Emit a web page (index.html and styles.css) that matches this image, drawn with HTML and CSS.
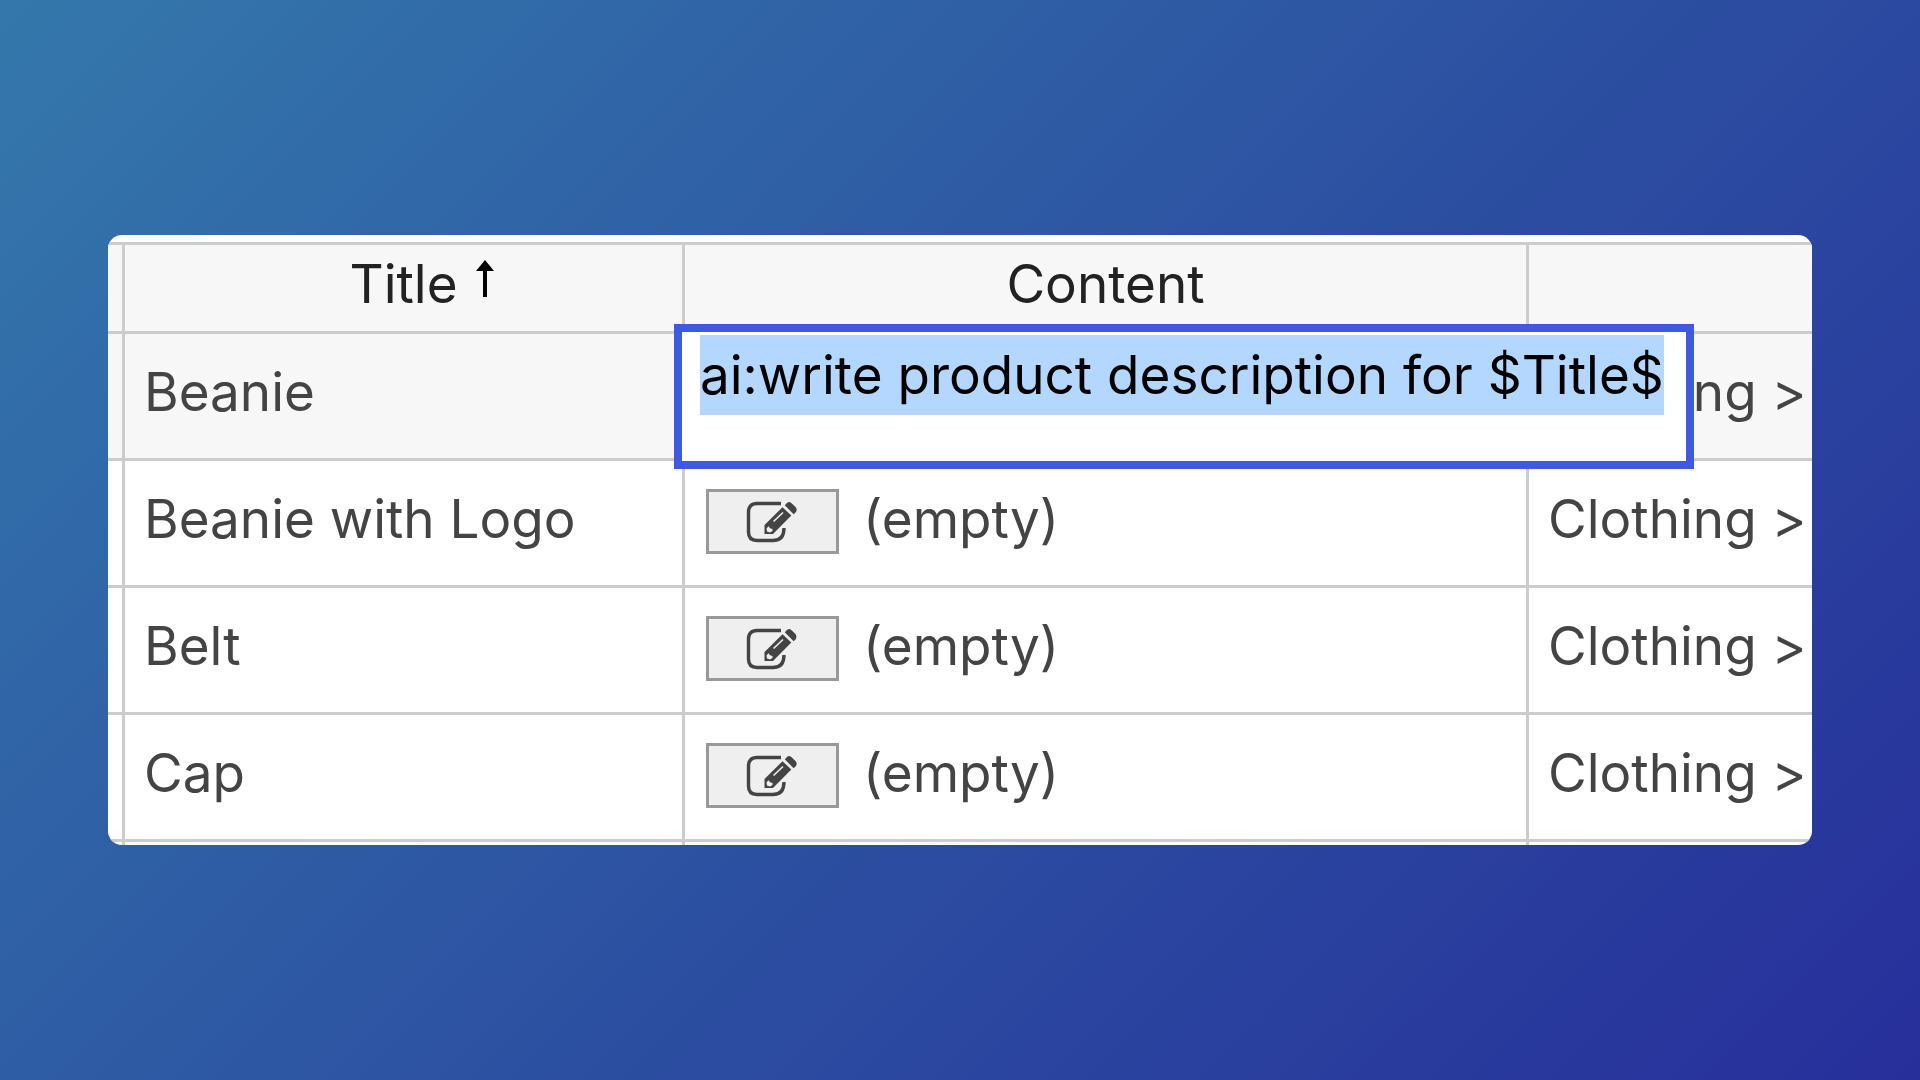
FILE: index.html
```html
<!DOCTYPE html>
<html lang="en">
<head>
<meta charset="utf-8">
<title>Products</title>
<link rel="stylesheet" href="styles.css">
</head>
<body>
<svg class="sprite" aria-hidden="true">
  <symbol id="edit" viewBox="0 0 52 44">
    <path class="icon-line" d="M35 3.500H11Q2.500 3.500 2.500 12V32Q2.500 40.500 11 40.500H27Q38 40.500 38 28"/>
    <path class="icon-fill" d="M18.500 34V25L36.500 7.200L45.300 15.600L27 34Z"/>
    <path class="icon-fill" d="M38.800 5.300L41 3Q43 1 45.300 3L49.500 7Q51.500 9.300 50 12L47.600 14.200Z"/>
    <path class="icon-cut" d="M21 31.500L20.500 28.500L22.500 26.300L24 28.300L26.500 29L26.500 31L24 32.500Z"/>
    <path class="icon-shine" d="M27.500 21.500L37 12.500"/>
  </symbol>
</svg>
<main class="card">
  <table class="grid">
    <colgroup>
      <col class="col-stub"><col class="col-title"><col class="col-content"><col>
    </colgroup>
    <thead>
      <tr>
        <th></th>
        <th scope="col">
          <button class="sort" type="button">
            <span class="sort-label">Title</span>
            <svg class="sort-arrow" viewBox="0 0 18 38" aria-hidden="true"><path d="M9 0L18 11H11V37H7V11H0Z"/></svg>
          </button>
        </th>
        <th scope="col">Content</th>
        <th></th>
      </tr>
    </thead>
    <tbody>
      <tr class="active">
        <td></td>
        <td>Beanie</td>
        <td class="editing"><textarea class="editor" aria-label="Content" spellcheck="false" autofocus>ai:write product description for $Title$</textarea></td>
        <td>Clothing &gt;</td>
      </tr>
      <tr>
        <td></td>
        <td>Beanie with Logo</td>
        <td><div class="content"><button class="edit" type="button" aria-label="Edit"><svg class="icon"><use href="#edit"/></svg></button><span>(empty)</span></div></td>
        <td>Clothing &gt;</td>
      </tr>
      <tr>
        <td></td>
        <td>Belt</td>
        <td><div class="content"><button class="edit" type="button" aria-label="Edit"><svg class="icon"><use href="#edit"/></svg></button><span>(empty)</span></div></td>
        <td>Clothing &gt;</td>
      </tr>
      <tr>
        <td></td>
        <td>Cap</td>
        <td><div class="content"><button class="edit" type="button" aria-label="Edit"><svg class="icon"><use href="#edit"/></svg></button><span>(empty)</span></div></td>
        <td>Clothing &gt;</td>
      </tr>
      <tr class="next"><td></td><td></td><td></td><td></td></tr>
    </tbody>
  </table>
</main>
<script src="script.js"></script>
</body>
</html>
```
FILE: styles.css
```css
* { box-sizing: border-box; }

body {
  margin: 0;
  min-height: 100vh;
  padding: 0 108px;
  display: flex;
  align-items: center;
  background: linear-gradient(135deg, #3478ab 0%, #3065a7 25%, #2c4fa1 55%, #272f9b 100%);
  color: #444;
  font: 53px/60px Inter, "Liberation Sans", sans-serif;
}

.sprite { position: absolute; width: 0; height: 0; }

.card {
  flex: 1;
  min-width: 0;
  padding-top: 7px;
  background: #fff;
  border-radius: 14px;
  overflow: hidden;
}

.grid {
  width: 100%;
  table-layout: fixed;
  border-spacing: 0;
  border-top: 3px solid #ccc;
}

.col-stub { width: 14px; }
.col-title { width: 560px; }
.col-content { width: 844px; }

th, td {
  padding: 28px 0 0 19px;
  height: 127px;
  border-left: 3px solid #ccc;
  border-bottom: 3px solid #ccc;
  vertical-align: top;
  text-align: left;
  white-space: nowrap;
}

th {
  height: 89px;
  padding: 9px 0 0;
  background: #f7f7f7;
  color: #222;
  font-weight: 400;
  text-align: center;
}

th:first-child, td:first-child { padding: 0; border-left: 0; }

.active td { background: #f7f7f7; }

.next td { height: 3px; padding: 0; border-bottom: 0; }

.sort {
  display: grid;
  grid-template-columns: 1fr auto 1fr;
  column-gap: 18px;
  width: 100%;
  padding: 0;
  border: 0;
  background: none;
  color: inherit;
  font: inherit;
}

.sort-label { grid-column: 2; }

.sort-arrow {
  width: 18px;
  height: 38px;
  margin-top: 6px;
  fill: #000;
}

.content { display: flex; align-items: flex-start; gap: 24px; padding-left: 2px; }

.edit {
  display: flex;
  align-items: center;
  justify-content: center;
  width: 133px;
  height: 65px;
  padding: 0 2px 0 0;
  border: 3px solid #999;
  border-radius: 0;
  background: #efefef;
}

.icon { width: 52px; height: 44px; }
.icon-line { fill: none; stroke: #444; stroke-width: 3.4; }
.icon-fill { fill: #444; }
.icon-cut { fill: #efefef; }
.icon-shine { fill: none; stroke: #efefef; stroke-width: 1.6; }

.editing { position: relative; }

.editor {
  position: absolute;
  top: -10px;
  left: -11px;
  z-index: 1;
  width: 1020px;
  height: 145px;
  padding: 3px 18px;
  border: 8px solid #3f5ae0;
  border-radius: 0;
  outline: 0;
  background: #fff;
  color: #000;
  font: inherit;
  line-height: 80px;
  white-space: nowrap;
  overflow: hidden;
  resize: none;
}

.editor::selection { background: #b3d7ff; color: #000; }
```
FILE: script.js
```js
const editor = document.querySelector(".editor");
editor.focus();
editor.select();
```
